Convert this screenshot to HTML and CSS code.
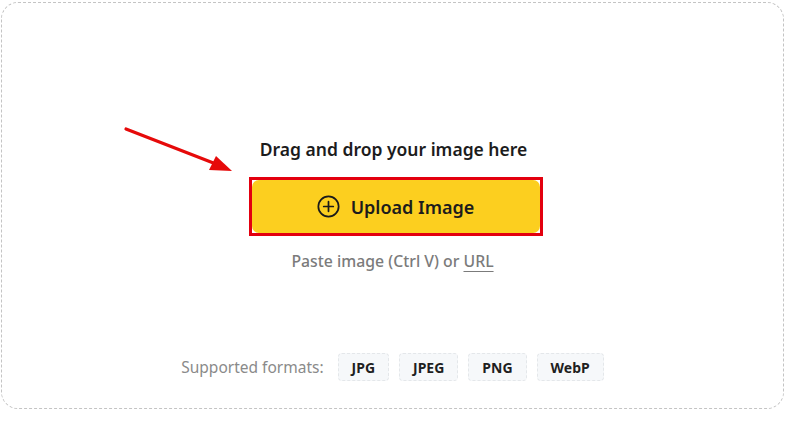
FILE: index.html
```html
<!DOCTYPE html>
<html>
<head>
<meta charset="utf-8">
<link rel="stylesheet" href="styles.css">
</head>
<body>
<div class="page">
  <div class="dropzone">
    <h2 class="title">Drag and drop your image here</h2>
    <div class="highlight">
      <button class="upload">
        <svg class="plus" viewBox="0 0 24 24" width="23" height="23">
          <circle cx="12" cy="12" r="10.6" fill="none" stroke="#1a1a1a" stroke-width="1.8"/>
          <path d="M12 7v10M7 12h10" stroke="#1a1a1a" stroke-width="1.8" stroke-linecap="round"/>
        </svg>
        <span>Upload Image</span>
      </button>
    </div>
    <p class="paste">Paste image (Ctrl V) or <span class="url">URL</span></p>
    <div class="formats">
      <span class="label">Supported formats:</span>
      <span class="chip">JPG</span>
      <span class="chip">JPEG</span>
      <span class="chip">PNG</span>
      <span class="chip">WebP</span>
    </div>
  </div>
  <svg class="arrow" width="130" height="60" viewBox="0 0 130 60">
    <path d="M6 9 L96 44" stroke="#e60a0a" stroke-width="3.2" stroke-linecap="round"/>
    <path d="M112 51 L89 50 L96 36 Z" fill="#e60a0a"/>
  </svg>
</div>
</body>
</html>
```

FILE: styles.css
```css
html, body {
  margin: 0;
  padding: 0;
  background: #ffffff;
}
body {
  font-family: "Noto Sans", "Open Sans", sans-serif;
  width: 800px;
  height: 423px;
  overflow: hidden;
}
.page {
  position: relative;
  padding: 2px 0 0 1px;
}
.dropzone {
  width: 783px;
  height: 407px;
  border: 1.5px dashed #c4c4c4;
  border-radius: 17px;
  box-sizing: border-box;
  display: flex;
  flex-direction: column;
  align-items: center;
  padding-top: 134px;
}
.title {
  margin: 0;
  font-size: 17.5px;
  line-height: 24px;
  font-weight: 600;
  color: #1c1c1c;
  padding-left: 2px;
}
.highlight {
  margin-top: 16px;
  margin-left: 6px;
  border: 3px solid #e3000f;
  width: 294px;
  height: 59px;
  box-sizing: border-box;
}
.upload {
  width: 100%;
  height: 100%;
  border: none;
  border-radius: 7px;
  background: #fccf1f;
  display: flex;
  align-items: center;
  justify-content: center;
  gap: 11px;
  font-family: inherit;
  font-size: 18px;
  font-weight: 600;
  color: #1c1c1c;
  padding: 0;
}
.plus {
  display: block;
}
.paste {
  margin: 15px 0 0 0;
  font-size: 15.8px;
  line-height: 20px;
  font-weight: 500;
  color: #7b7b7b;
}
.url {
  text-decoration: underline;
  text-underline-offset: 4px;
  text-decoration-thickness: 1px;
}
.formats {
  margin-top: 82px;
  display: flex;
  align-items: center;
  gap: 10px;
}
.label {
  font-size: 15.5px;
  color: #8a8a8a;
  margin-right: 4px;
}
.chip {
  height: 28px;
  box-sizing: border-box;
  padding: 0 13px;
  display: flex;
  align-items: center;
  font-size: 14px;
  font-weight: 700;
  color: #1f1f1f;
  background: #f6f8fa;
  border: 1px dashed #e4e7ea;
  border-radius: 4px;
}
.arrow {
  position: absolute;
  left: 120px;
  top: 120px;
}
```
